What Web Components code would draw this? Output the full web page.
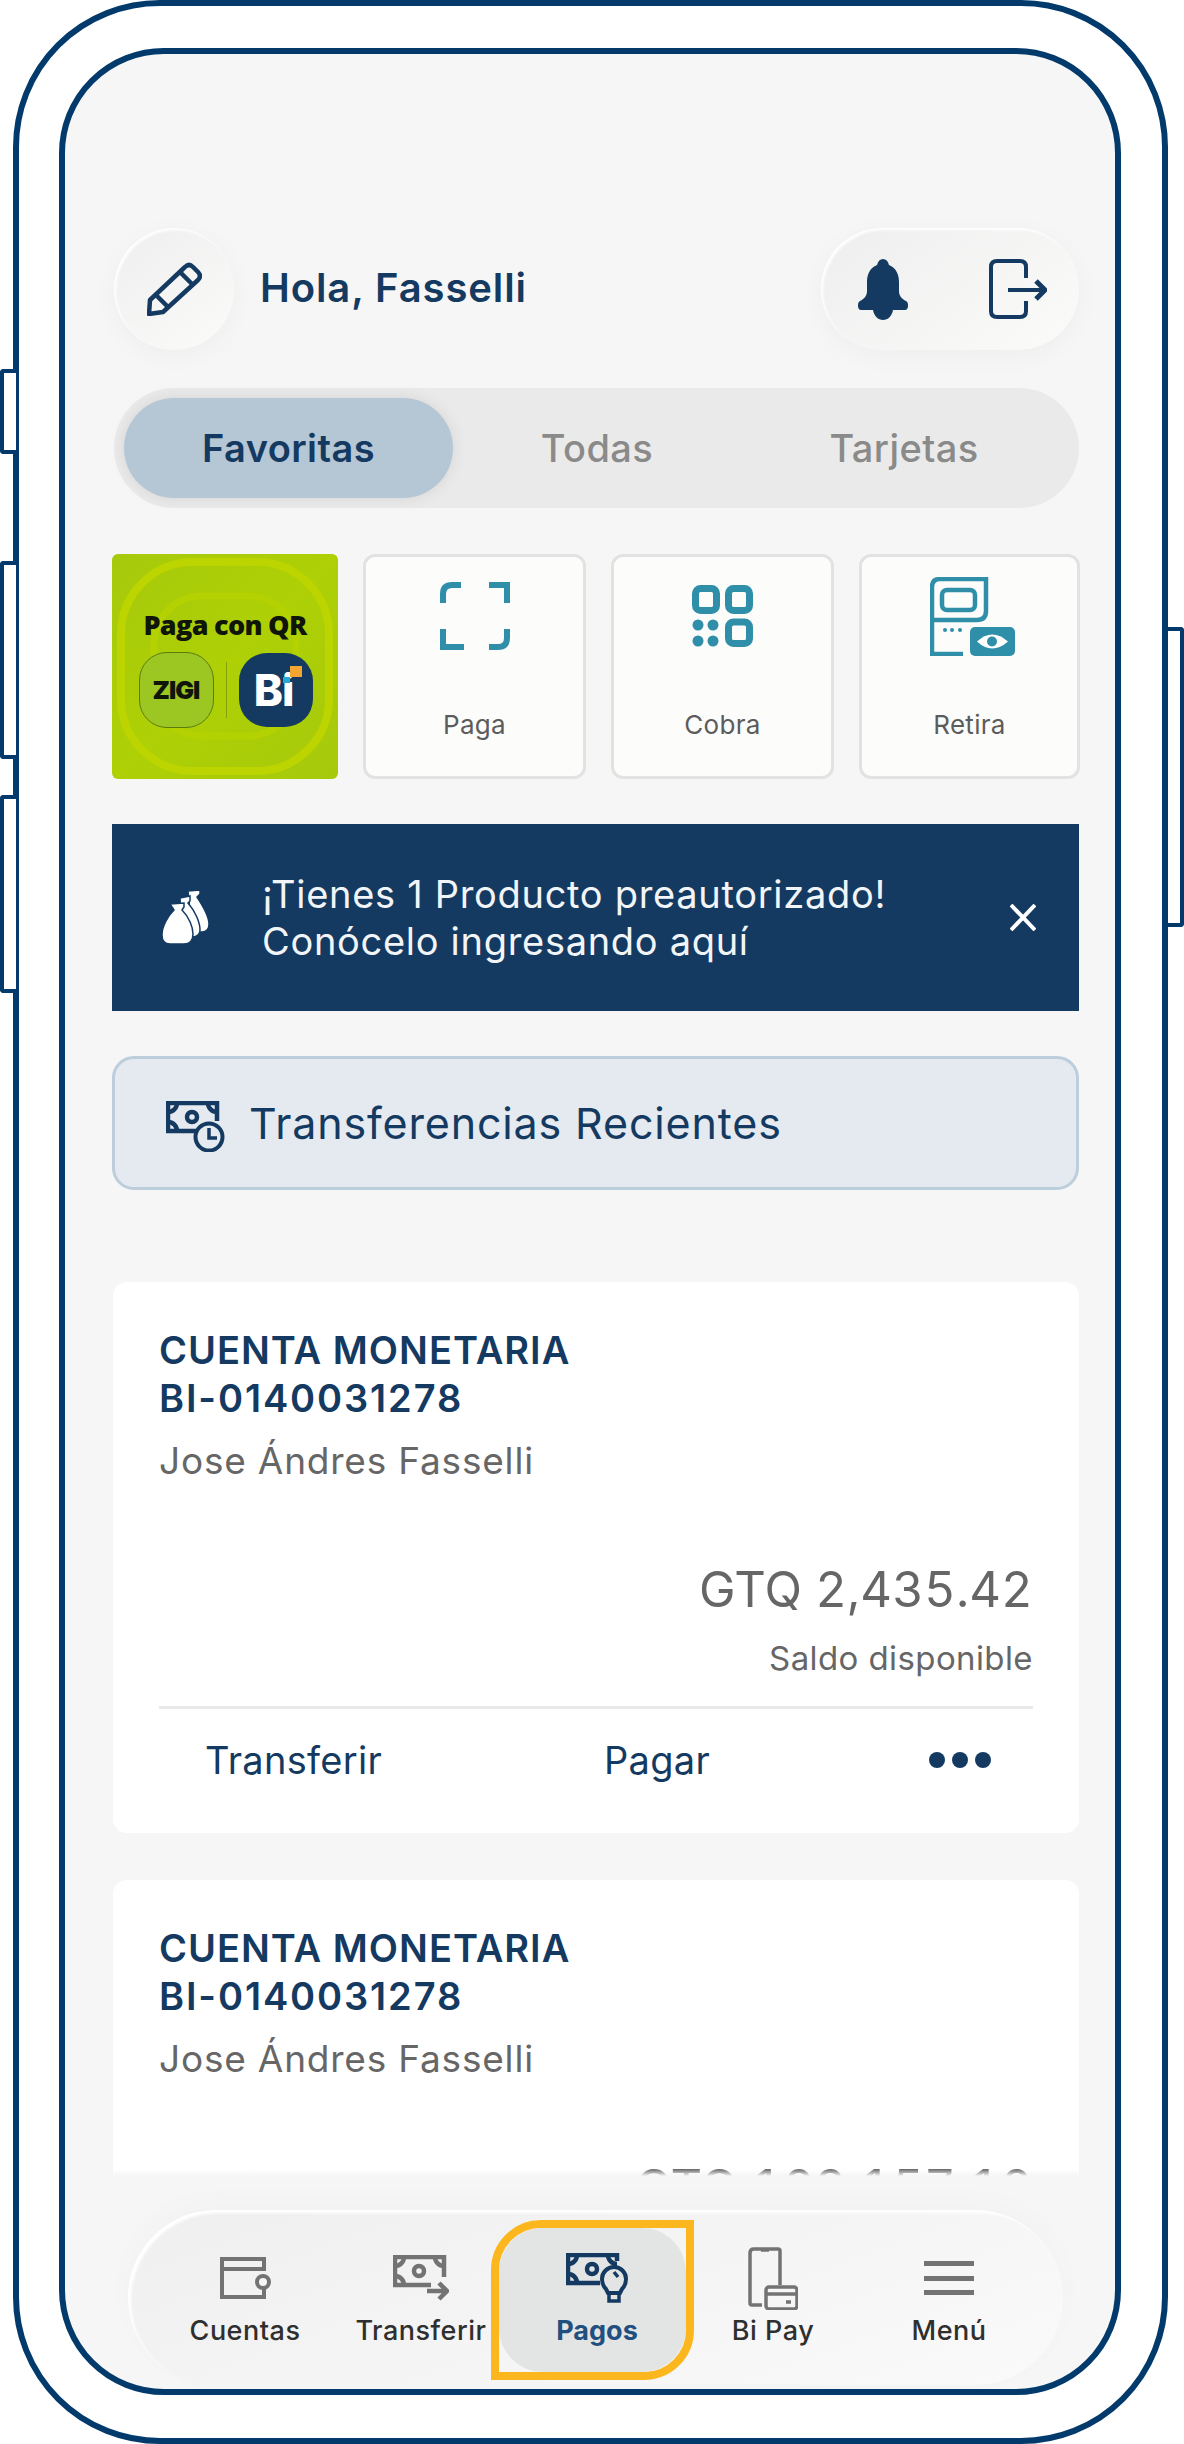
<!DOCTYPE html>
<html lang="es">
<head>
<meta charset="utf-8">
<title>Bi</title>
<style>
  html, body { margin: 0; background: #fff; overflow: hidden; }
  body { font-family: Inter, "Noto Sans", sans-serif; }
</style>
</head>
<body>
<phone-frame>
  <app-screen>
    <top-header name="Hola, Fasselli"></top-header>
    <tab-bar></tab-bar>
    <quick-row>
      <promo-tile></promo-tile>
      <quick-card icon="scan">Paga</quick-card>
      <quick-card icon="qr">Cobra</quick-card>
      <quick-card icon="atm">Retira</quick-card>
    </quick-row>
    <promo-banner>¡Tienes 1 Producto preautorizado!<br>Conócelo ingresando aquí</promo-banner>
    <recent-bar>Transferencias Recientes</recent-bar>
    <account-card holder="Jose Ándres Fasselli" amount="GTQ 2,435.42"></account-card>
    <account-card holder="Jose Ándres Fasselli" amount="GTQ 123,157.12"></account-card>
    <bottom-nav slot="nav">
      <nav-item icon="wallet">Cuentas</nav-item>
      <nav-item icon="send">Transferir</nav-item>
      <nav-item icon="bill" active>Pagos</nav-item>
      <nav-item icon="bipay">Bi Pay</nav-item>
      <nav-item icon="menu">Menú</nav-item>
    </bottom-nav>
  </app-screen>
</phone-frame>

<script>
"use strict";

const NAVY = '#153a61';
const TEAL = '#2f8fa8';

// banknote shared by the transfer/pagos icons, bottom right corner stays open
const note = (color, bottom, right) => `
  <g fill="none" stroke="${color}" stroke-width="4.500">
    <path d="M${bottom} 30H2V2H51V${right}"/>
    <path d="M2 11a9 9 0 0 0 9-9M51 11a9 9 0 0 1-9-9M2 21a9 9 0 0 1 9 9"/>
    <circle cx="26" cy="16" r="5"/>
  </g>`;

const ICONS = {
  pencil: `<svg width="55" height="54" viewBox="0 0 55 54" fill="none" stroke="${NAVY}" stroke-width="4.500" stroke-linejoin="round">
    <path d="M3 38 38 5q4-4 8 0l5 5q4 4 0 8L16 50 2 52z"/><path d="M33 10l13 13M9 33l12 12"/></svg>`,
  bell: `<svg width="50" height="61" viewBox="0 0 50 61" fill="${NAVY}">
    <path d="M25 0c3 0 5 2 6 6 7 3 10 9 10 17v9c0 5 3 8 7 10 2 1 2 3 2 5s-1 4-3 4H3c-2 0-3-2-3-4s0-4 2-5c4-2 7-5 7-10v-9c0-8 3-14 10-17 1-4 3-6 6-6z"/>
    <path d="M15 51h20c-1 6-5 10-10 10s-9-4-10-10z"/></svg>`,
  logout: `<svg width="58" height="60" viewBox="0 0 58 60" fill="none" stroke="${NAVY}" stroke-width="4">
    <path d="M37 19V8q0-6-6-6H8Q2 2 2 8v44q0 6 6 6h23q6 0 6-6V42"/><path d="M19 31h34"/><path d="M47 22l9 9-9 9" stroke-width="5"/></svg>`,
  scan: `<svg width="70" height="68" viewBox="0 0 70 68" fill="none" stroke="${TEAL}" stroke-width="6">
    <path d="M21 3H12q-9 0-9 9v9M49 3h18v18M3 47v18h21M67 47v9q0 9-9 9H49"/></svg>`,
  qr: `<svg width="61" height="62" viewBox="0 0 61 62" fill="none" stroke="${TEAL}" stroke-width="7">
    <rect x="3.500" y="3.500" width="21" height="22" rx="5"/><rect x="36.500" y="3.500" width="21" height="22" rx="5"/><rect x="36.500" y="37" width="21" height="21.500" rx="5"/>
    <g fill="${TEAL}" stroke="none"><circle cx="6" cy="40" r="5.500"/><circle cx="21" cy="40" r="5.500"/><circle cx="6" cy="56" r="5.500"/><circle cx="21" cy="56" r="5.500"/></g></svg>`,
  atm: `<svg style="margin-left:6px" width="85" height="79" viewBox="0 0 85 79" fill="none" stroke="${TEAL}" stroke-width="4.500">
    <path d="M33 77H2V10q0-8 8-8h46v32q0 9-9 9H2"/><rect x="12" y="13" width="33" height="20" rx="5"/>
    <g fill="${TEAL}" stroke="none"><circle cx="15" cy="53" r="2"/><circle cx="22" cy="53" r="2"/><circle cx="30" cy="53" r="2"/>
    <rect x="40" y="50" width="45" height="29" rx="5"/></g>
    <path d="M47 64.500q15-14 31 0-16 14-31 0z" fill="#fff" stroke="none"/><circle cx="62" cy="64.500" r="5" fill="${TEAL}" stroke="none"/></svg>`,
  bags: `<svg width="48" height="55" viewBox="0 0 48 55" fill="#fff" stroke="${NAVY}" stroke-width="1.500">
    <path d="M26 1 38 0v4l-3 3c6 9 12 19 12 27 0 5-3 8-7 8H30z"/>
    <path d="M18 8 28 6v5l-2 2c7 8 12 19 12 27 0 4-2 6-6 7l-12-2z"/>
    <path d="M8 14 22 13v4l-2 3c7 7 11 17 11 24 0 7-3 10-9 10H8c-5 0-8-3-8-9 0-9 6-19 12-25z"/></svg>`,
  clock: `<svg style="margin-top:6px" width="60" height="51" viewBox="0 0 60 51" fill="none" stroke="${NAVY}">
    ${note(NAVY, 30, 20)}<circle cx="43" cy="36" r="13.500" fill="#e4eaf0" stroke-width="4"/><path d="M43 27v10h8" stroke-width="3.500"/></svg>`,
  wallet: `<svg width="51" height="42" viewBox="0 0 51 42" fill="none" stroke="#737373" stroke-width="4">
    <path d="M44 22V40H2V2h42v10H2"/><circle cx="43" cy="25" r="6" fill="#f5f5f5"/></svg>`,
  send: `<svg width="56" height="46" viewBox="0 0 56 46" fill="none" stroke="#737373">
    ${note('#737373', 38, 22)}<path d="M34 36h20M46 28l8 8-8 8" stroke-width="4.500"/></svg>`,
  bill: `<svg width="62" height="50" viewBox="0 0 62 50" fill="none" stroke="${NAVY}">
    ${note(NAVY, 34, 8)}<path d="M40 36c-3-3-4-6-4-10a12 12 0 0 1 24 0c0 4-1 7-4 10l-2 4h-12z" stroke-width="4"/><path d="M43 40h10v8H43zM48 19l4 5" stroke-width="3.500"/></svg>`,
  bipay: `<svg width="50" height="63" viewBox="0 0 50 63" fill="none" stroke="#737373" stroke-width="3.500">
    <path d="M14 58H4q-2 0-2-2V6q0-4 4-4h24q2 0 2 2v34"/><path d="M13 3h8"/>
    <rect x="18" y="40" width="31" height="22" rx="3"/><path d="M18 47h31M38 55h5"/></svg>`,
  menu: `<svg width="50" height="34" viewBox="0 0 50 34" fill="#737373"><rect width="50" height="5"/><rect y="15" width="50" height="5"/><rect y="29" width="50" height="5"/></svg>`
};

class PhoneFrame extends HTMLElement {
  constructor() {
    super();
    this.attachShadow({mode: 'open'}).innerHTML = `
      <style>
        :host { display: block; position: relative; box-sizing: border-box; width: 1155px; height: 2444px; margin-left: 13px;
          border: 6px solid #023a6b; border-radius: 147px; padding: 42px 41px 43px 40px; background: #fff; }
        .btn { position: absolute; box-sizing: border-box; width: 16px; border: 4px solid #023a6b; background: #fff; }
        .l { left: -19px; border-right: 0; border-radius: 4px 0 0 4px; }
        .r { right: -22px; border-left: 0; border-radius: 0 4px 4px 0; }
      </style>
      <div class="btn l" style="top:363px;height:85px"></div>
      <div class="btn l" style="top:555px;height:198px"></div>
      <div class="btn l" style="top:789px;height:198px"></div>
      <div class="btn r" style="top:621px;height:300px"></div>
      <slot></slot>`;
  }
}

class AppScreen extends HTMLElement {
  constructor() {
    super();
    this.attachShadow({mode: 'open'}).innerHTML = `
      <style>
        :host { display: flex; flex-direction: column; box-sizing: border-box; height: 100%; border: 6px solid #023a6b; border-radius: 105px; background: #f6f6f6; overflow: hidden; }
        main { position: relative; height: 2122px; box-sizing: border-box; padding: 174px 35px 0 47px; overflow: hidden; flex: none; display: flex; flex-direction: column; }
        main::after { content: ""; position: absolute; left: 0; right: 0; bottom: 0; height: 7px; background: linear-gradient(rgba(246,246,246,0), #f6f6f6); }
        footer { margin-top: auto; padding: 0 52px 4px 63px; }
      </style>
      <main><slot></slot></main>
      <footer><slot name="nav"></slot></footer>`;
  }
}

class TopHeader extends HTMLElement {
  constructor() {
    super();
    this.attachShadow({mode: 'open'}).innerHTML = `
      <style>
        :host { display: flex; align-items: center; height: 122px; margin-bottom: 38px; flex: none; color: ${NAVY}; }
        .soft { background: linear-gradient(145deg, #eeeeee, #fbfbfa); box-shadow: 0 6px 26px rgba(0,0,0,.035), inset 2px 2px 3px #fff; display: flex; align-items: center; }
        .pen { width: 120px; height: 122px; border-radius: 50%; justify-content: center; margin-left: 2px; }
        h1 { margin: 0 0 3px 26px; font: 600 40px Inter, sans-serif; letter-spacing: .9px; flex: 1; }
        .acts { width: 258px; height: 122px; border-radius: 61px; box-sizing: border-box; padding-left: 37px; gap: 81px; margin-right: 1px; }
      </style>
      <div class="soft pen">${ICONS.pencil}</div>
      <h1>${this.getAttribute('name')}</h1>
      <div class="soft acts">${ICONS.bell}${ICONS.logout}</div>`;
  }
}

class TabBar extends HTMLElement {
  constructor() {
    super();
    this.attachShadow({mode: 'open'}).innerHTML = `
      <style>
        :host { display: grid; grid-template-columns: 329px 288px 326px; box-sizing: border-box; height: 120px; padding: 10px; margin: 0 0 46px 2px; width: 965px; flex: none;
          border-radius: 60px; background: #eaeaea; font: 500 38px Inter, sans-serif; letter-spacing: .4px; color: #8a8a8a; }
        div { display: flex; align-items: center; justify-content: center; border-radius: 50px; }
        .on { background: #b5c6d5; color: ${NAVY}; font-weight: 600; box-shadow: 0 0 16px rgba(0,0,0,.09); }
      </style>
      <div class="on">Favoritas</div><div>Todas</div><div>Tarjetas</div>`;
  }
}

class QuickRow extends HTMLElement {
  constructor() {
    super();
    this.attachShadow({mode: 'open'}).innerHTML = `
      <style>
        :host { display: grid; grid-template-columns: 226px 223px 223px 221px; gap: 25px; height: 225px; margin-bottom: 45px; flex: none; }
      </style>
      <slot></slot>`;
  }
}

class PromoTile extends HTMLElement {
  constructor() {
    super();
    this.attachShadow({mode: 'open'}).innerHTML = `
      <style>
        :host { display: flex; flex-direction: column; align-items: center; position: relative; overflow: hidden; border-radius: 6px; background: linear-gradient(135deg, #a6c90c, #aed005 50%, #a6c90c); box-sizing: border-box; padding-top: 53px; }
        svg.rings { position: absolute; inset: 0; }
        .t, .logos { position: relative; }
        .t { font: 800 27px/36px "Open Sans", sans-serif; color: #10150a; letter-spacing: -.7px; white-space: nowrap; }
        .logos { display: flex; align-items: center; margin-top: 9px; margin-left: 1px; }
        .z, .b { width: 75px; height: 76px; border-radius: 28px; display: flex; align-items: center; justify-content: center; }
        .z { background: #9cc622; border: 1px solid #5d7a10; box-sizing: border-box; font: 900 25px Inter, sans-serif; color: #10150a; letter-spacing: -1px; }
        .div { width: 1px; height: 56px; background: #86a00a; margin: 0 12px; }
        .b { width: 74px; height: 74px; background: ${NAVY}; position: relative; color: #fff; font: 800 44px Inter, sans-serif; letter-spacing: -1px; padding-right: 4px; box-sizing: border-box; }
        .o { position: absolute; left: 51px; top: 13px; width: 12px; height: 11px; background: #f2a630; }
        .c { position: absolute; left: 44px; top: 24px; width: 7px; height: 6px; background: #25a9d6; }
      </style>
      <svg class="rings" width="226" height="225" viewBox="0 0 226 225" fill="none" stroke="#bcd400">
        <rect x="9" y="8" width="208" height="209" rx="72" stroke-width="8"/>
        <rect x="42" y="42" width="142" height="140" rx="48" stroke-width="7" stroke="#b4d102"/>
      </svg>
      <div class="t">Paga con QR</div>
      <div class="logos">
        <div class="z">ZIGI</div><div class="div"></div>
        <div class="b">Bi<i class="o"></i><i class="c"></i></div>
      </div>`;
  }
}

class QuickCard extends HTMLElement {
  constructor() {
    super();
    this.attachShadow({mode: 'open'}).innerHTML = `
      <style>
        :host { display: flex; flex-direction: column; align-items: center; position: relative; box-sizing: border-box; border: 3px solid #e2e2e2; border-radius: 12px; background: #fcfcfb; color: #5c5c5c; font: 400 26px Inter, sans-serif; letter-spacing: .3px; }
        .i { height: 118px; display: flex; align-items: center; justify-content: center; margin-bottom: 34px; }
      </style>
      <div class="i">${ICONS[this.getAttribute('icon')]}</div>
      <slot></slot>`;
  }
}

class PromoBanner extends HTMLElement {
  constructor() {
    super();
    this.attachShadow({mode: 'open'}).innerHTML = `
      <style>
        :host { display: flex; align-items: center; height: 187px; margin: 0 1px 45px 0; flex: none; box-sizing: border-box; padding-left: 50px; background: ${NAVY}; color: #f2f5f8; font: 400 38px/47px Inter, sans-serif; letter-spacing: .7px; }
        .t { margin-left: 52px; flex: 1; }
        svg.x { margin-right: 43px; }
      </style>
      ${ICONS.bags}
      <div class="t"><slot></slot></div>
      <svg class="x" width="26" height="27" viewBox="0 0 26 27" stroke="#fff" stroke-width="4"><path d="M1 1l24 25M25 1L1 26"/></svg>`;
  }
}

class RecentBar extends HTMLElement {
  constructor() {
    super();
    this.attachShadow({mode: 'open'}).innerHTML = `
      <style>
        :host { display: flex; align-items: center; gap: 23px; box-sizing: border-box; height: 134px; margin: 0 1px 92px 0; flex: none; padding-left: 51px; border: 3px solid #bccddc; border-radius: 22px; background: #e4eaf0; color: ${NAVY}; font: 400 43px Inter, sans-serif; letter-spacing: .85px; }
      </style>
      ${ICONS.clock}<slot></slot>`;
  }
}

class AccountCard extends HTMLElement {
  constructor() {
    super();
    this.attachShadow({mode: 'open'}).innerHTML = `
      <style>
        :host { display: block; box-sizing: border-box; height: 551px; margin: 0 1px 47px 1px; flex: none; padding: 44px 46px 0; border-radius: 14px; background: #fff; color: #666; }
        h2 { margin: 0; font: 600 38px/48px Inter, sans-serif; letter-spacing: 1px; color: ${NAVY}; }
        h2 span { letter-spacing: 1.9px; }
        .who { margin-top: 15px; font: 400 37px/48px Inter, sans-serif; letter-spacing: .8px; }
        .amt { margin-top: 76px; text-align: right; font: 400 49px/58px Inter, sans-serif; letter-spacing: .1px; font-variant-numeric: tabular-nums; }
        .lbl { margin-top: 19px; text-align: right; font: 400 33px/40px Inter, sans-serif; letter-spacing: .4px; padding-bottom: 28px; border-bottom: 3px solid #e9e9e9; }
        .row { display: grid; grid-template-columns: 399px 325px 1fr; align-items: center; height: 102px; padding-left: 46px; color: ${NAVY}; font: 400 38px Inter, sans-serif; letter-spacing: .3px; }
        .dots { display: flex; gap: 7px; }
        .dots i { width: 16px; height: 16px; border-radius: 50%; background: ${NAVY}; }
      </style>
      <h2>CUENTA MONETARIA<br><span>BI-0140031278</span></h2>
      <div class="who">${this.getAttribute('holder')}</div>
      <div class="amt">${this.getAttribute('amount')}</div>
      <div class="lbl">Saldo disponible</div>
      <div class="row"><span>Transferir</span><span>Pagar</span><div class="dots"><i></i><i></i><i></i></div></div>`;
  }
}

class BottomNav extends HTMLElement {
  constructor() {
    super();
    this.attachShadow({mode: 'open'}).innerHTML = `
      <style>
        :host { display: grid; grid-template-columns: repeat(5, 176px); box-sizing: border-box; height: 175px; padding-left: 29px; border-radius: 88px; background: linear-gradient(160deg, #efefef, #fafafa); box-shadow: 0 -8px 30px rgba(0,0,0,.02), inset 3px 3px 3px #fff; }
      </style>
      <slot></slot>`;
  }
}

class NavItem extends HTMLElement {
  constructor() {
    super();
    const active = this.hasAttribute('active');
    this.attachShadow({mode: 'open'}).innerHTML = `
      <style>
        :host { display: flex; flex-direction: column; align-items: center; position: relative; color: #2f2f2f; font: 500 27px Inter, sans-serif; letter-spacing: .5px; white-space: nowrap; }
        :host([active]) { color: #214f7f; font-weight: 700; letter-spacing: 0; }
        .i { height: 74px; margin-top: 31px; margin-bottom: -1px; display: flex; align-items: center; justify-content: center; position: relative; z-index: 1; }
        .t { position: relative; z-index: 1; }
        .hl { position: absolute; left: -18px; top: 10px; width: 203px; height: 160px; box-sizing: border-box; border: 8px solid #fdb71e; border-radius: 50px 0 50px 0; }
        .hl::before { content: ""; position: absolute; inset: 0; border-radius: 44px; background: #e3e4e4; }
      </style>
      ${active ? '<div class="hl"></div>' : ''}
      <div class="i">${ICONS[this.getAttribute('icon')]}</div>
      <div class="t"><slot></slot></div>`;
  }
}

customElements.define('phone-frame', PhoneFrame);
customElements.define('app-screen', AppScreen);
customElements.define('top-header', TopHeader);
customElements.define('tab-bar', TabBar);
customElements.define('quick-row', QuickRow);
customElements.define('promo-tile', PromoTile);
customElements.define('quick-card', QuickCard);
customElements.define('promo-banner', PromoBanner);
customElements.define('recent-bar', RecentBar);
customElements.define('account-card', AccountCard);
customElements.define('bottom-nav', BottomNav);
customElements.define('nav-item', NavItem);
</script>
</body>
</html>
